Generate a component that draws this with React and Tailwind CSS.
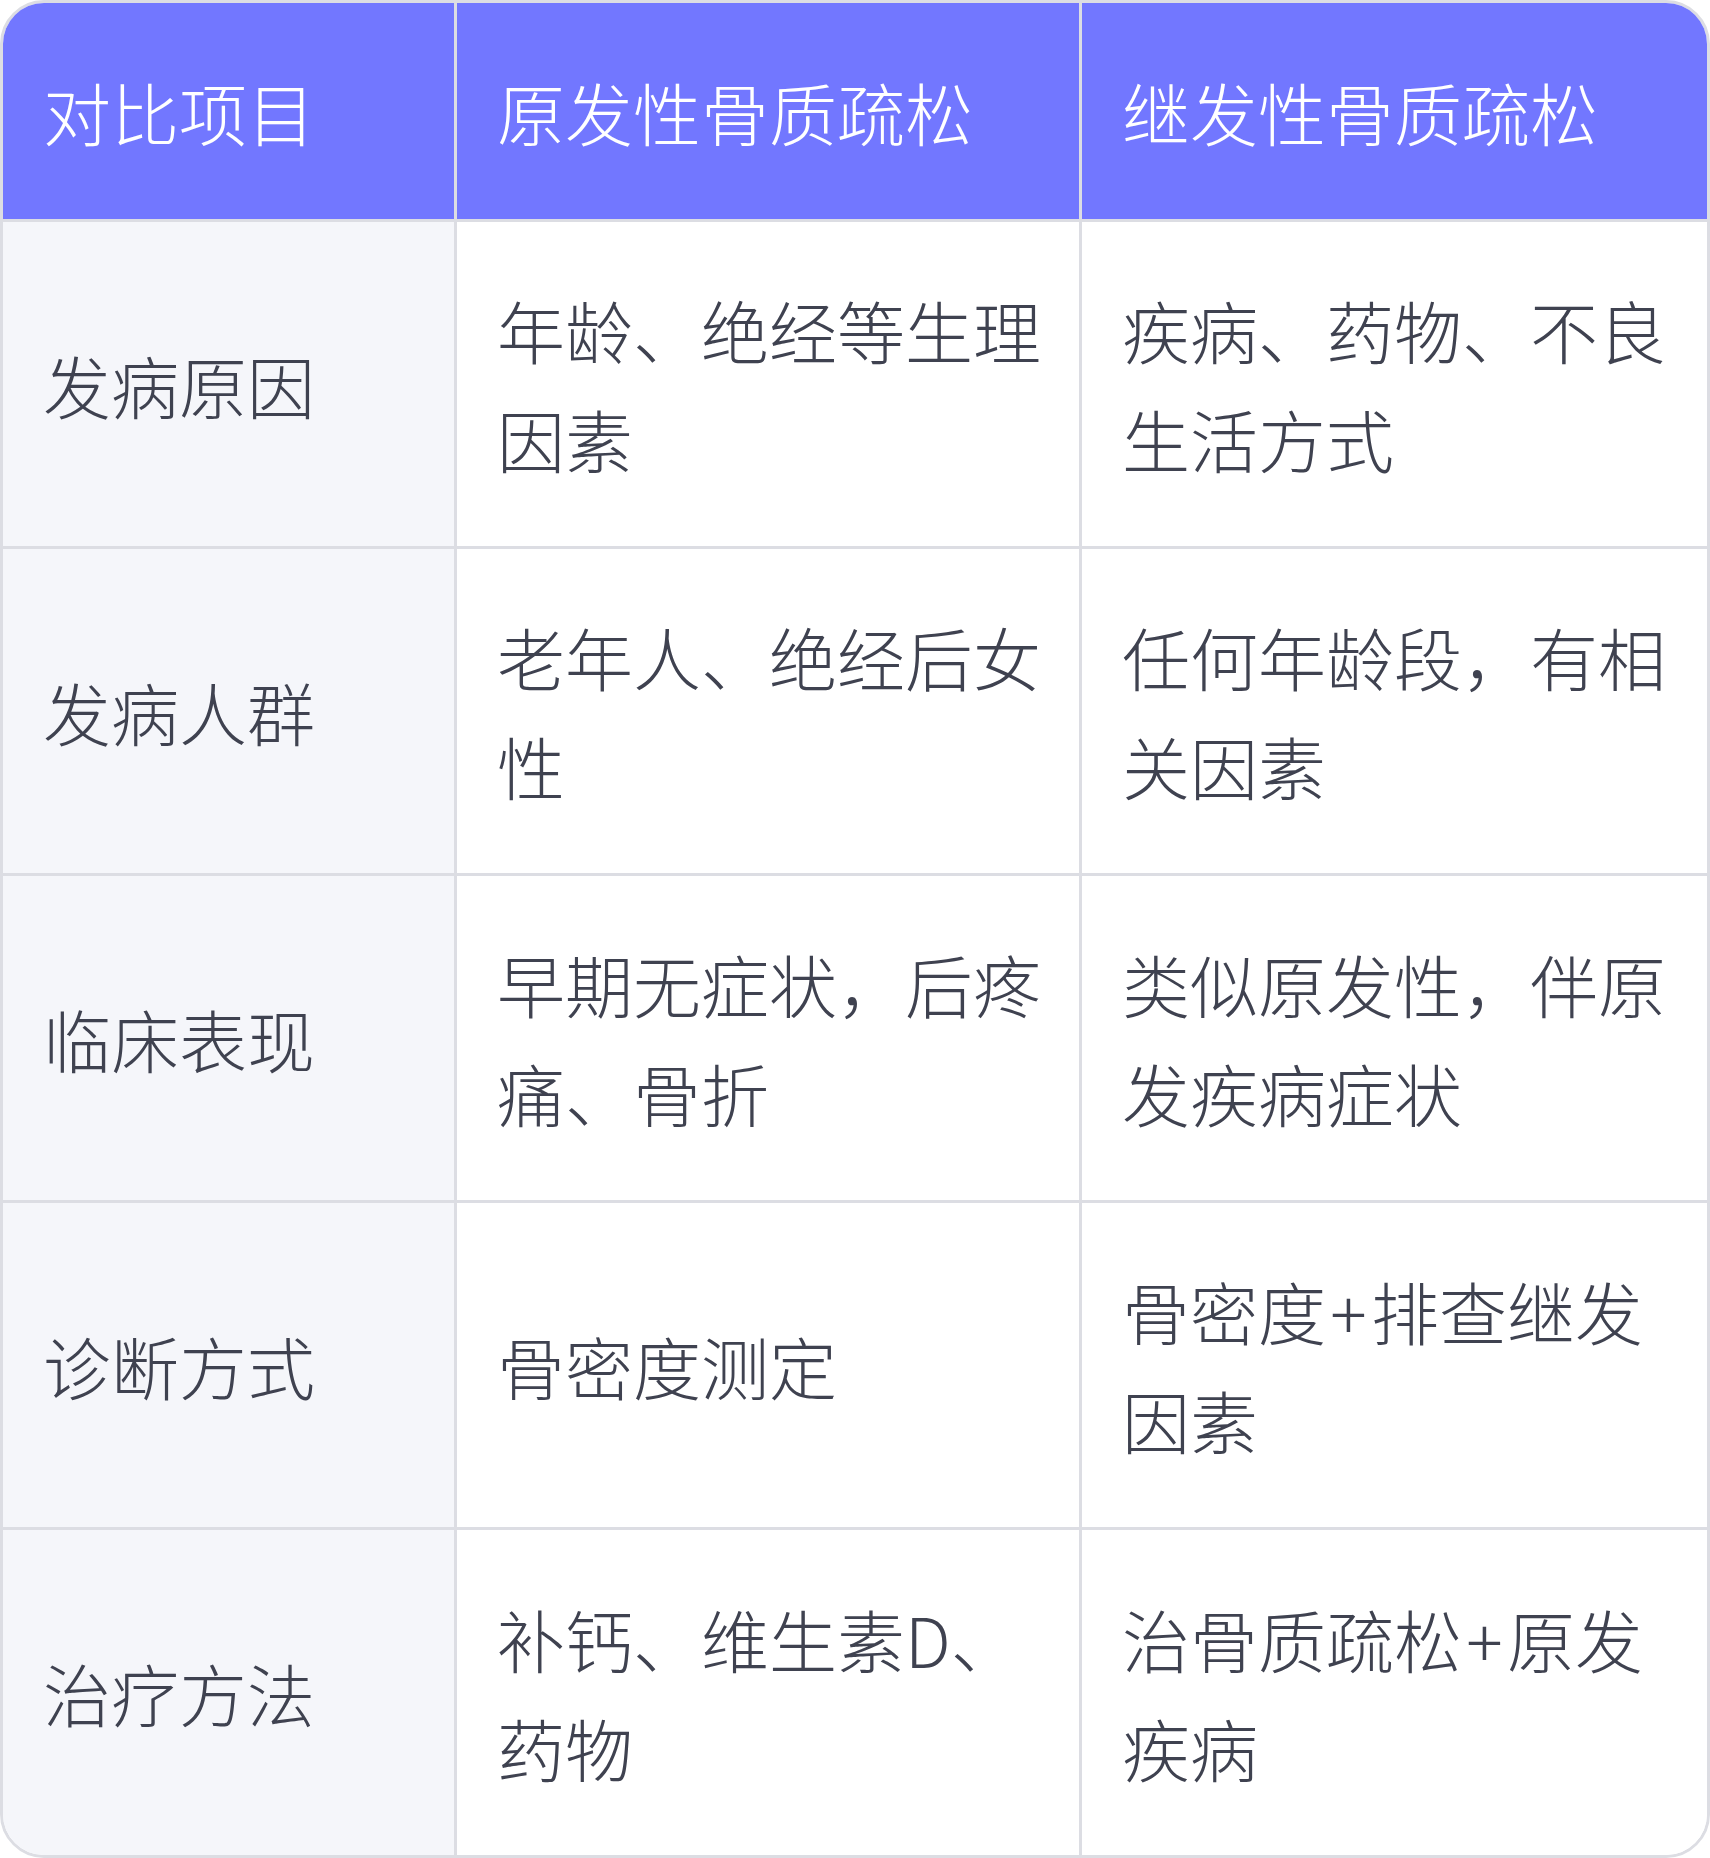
import React from 'react';

const headers = ['对比项目', '原发性骨质疏松', '继发性骨质疏松'];

// hair spaces around "+" to widen it a touch, as in the original
const rows = [
  ['发病原因', '年龄、绝经等生理因素', '疾病、药物、不良生活方式'],
  ['发病人群', '老年人、绝经后女性', '任何年龄段，有相关因素'],
  ['临床表现', '早期无症状，后疼痛、骨折', '类似原发性，伴原发疾病症状'],
  ['诊断方式', '骨密度测定', '骨密度\u200a+\u200a排查继发因素'],
  ['治疗方法', '补钙、维生素D、药物', '治骨质疏松\u200a+\u200a原发疾病'],
];

const font = { fontFamily: '"Noto Sans CJK SC", "Noto Sans", sans-serif' };

const App = () => {
  return (
    <div className="w-[1710px] h-[1858px] bg-white" style={font}>
      <div className="w-full h-full border-[3px] border-[#dcdde3] rounded-[44px] overflow-hidden grid grid-cols-[454px_625px_1fr] grid-rows-[219px_327px_327px_327px_327px_1fr]">
        {headers.map((h, i) => (
          <div
            key={h}
            className={`bg-[#7277ff] text-white text-[68px] font-light leading-[109px] pl-10 pr-[36px] flex items-center border-b-[3px] border-[#dcdde3] ${i < 2 ? 'border-r-[3px]' : ''}`}
          >
            {h}
          </div>
        ))}
        {rows.map((row, r) =>
          row.map((cell, c) => (
            <div
              key={r + '-' + c}
              className={`text-[#3f4250] text-[68px] font-light leading-[109px] pl-10 pr-[36px] flex items-center border-[#dcdde3] ${c === 0 ? 'bg-[#f5f6fa]' : 'bg-white'} ${c < 2 ? 'border-r-[3px]' : ''} ${r < 4 ? 'border-b-[3px]' : ''}`}
            >
              <span>{cell}</span>
            </div>
          ))
        )}
      </div>
    </div>
  );
};

export default App;
